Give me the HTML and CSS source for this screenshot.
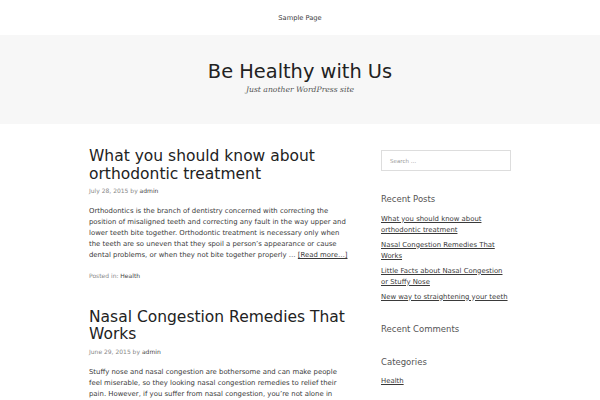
FILE: index.html
```html
<!DOCTYPE html>
<html lang="en">
<head>
<meta charset="utf-8">
<title>Be Healthy with Us</title>
<link rel="stylesheet" href="styles.css">
</head>
<body>
<nav class="topnav"><a class="navlink" href="#">Sample Page</a></nav>
<header class="masthead">
  <h1 class="site-title">Be Healthy with Us</h1>
  <p class="site-desc">Just another WordPress site</p>
</header>
<div class="container">
  <main class="content">
    <article class="post">
      <h2 class="post-title">What you should know about orthodontic treatment</h2>
      <div class="meta"><span class="date">July 28, 2015</span> by <span class="author">admin</span></div>
      <p class="excerpt">Orthodontics is the branch of dentistry concerned with correcting the position of misaligned teeth and correcting any fault in the way upper and lower teeth bite together. Orthodontic treatment is necessary only when the teeth are so uneven that they spoil a person’s appearance or cause dental problems, or when they not bite together properly … <a class="more" href="#">[Read more…]</a></p>
      <div class="cats">Posted in: <span class="cat">Health</span></div>
    </article>
    <article class="post">
      <h2 class="post-title">Nasal Congestion Remedies That Works</h2>
      <div class="meta"><span class="date">June 29, 2015</span> by <span class="author">admin</span></div>
      <p class="excerpt">Stuffy nose and nasal congestion are bothersome and can make people feel miserable, so they looking nasal congestion remedies to relief their pain. However, if you suffer from nasal congestion, you’re not alone in this.</p>
    </article>
  </main>
  <aside class="sidebar">
    <div class="widget search-widget">
      <div class="search-box">Search …</div>
    </div>
    <div class="widget">
      <h3 class="widget-title">Recent Posts</h3>
      <ul class="wlist">
        <li><a href="#">What you should know about orthodontic treatment</a></li>
        <li><a href="#">Nasal Congestion Remedies That Works</a></li>
        <li><a href="#">Little Facts about Nasal Congestion or Stuffy Nose</a></li>
        <li><a href="#">New way to straightening your teeth</a></li>
      </ul>
    </div>
    <div class="widget">
      <h3 class="widget-title">Recent Comments</h3>
    </div>
    <div class="widget">
      <h3 class="widget-title">Categories</h3>
      <ul class="wlist">
        <li><a href="#">Health</a></li>
      </ul>
    </div>
  </aside>
</div>
</body>
</html>
```

FILE: styles.css
```css
html, body {
  margin: 0;
  padding: 0;
  background: #ffffff;
}
body {
  font-family: "DejaVu Sans", sans-serif;
  color: #3a3a3a;
  overflow: hidden;
  height: 400px;
}
.topnav {
  height: 35px;
  display: flex;
  align-items: center;
  justify-content: center;
}
.navlink {
  font-size: 6.7px;
  color: #3a3a3a;
  text-decoration: none;
}
.masthead {
  background: #f7f7f7;
  height: 89px;
  box-sizing: border-box;
  padding-top: 25px;
  text-align: center;
}
.site-title {
  margin: 0;
  font-weight: normal;
  font-size: 19.4px;
  line-height: 23px;
  color: #222222;
}
.site-desc {
  margin: 1px 0 0;
  font-family: "DejaVu Serif", serif;
  font-style: italic;
  font-size: 7.65px;
  line-height: 11px;
  color: #555555;
}
.container {
  width: 422px;
  margin: 0 auto;
  display: flex;
  gap: 32px;
  padding-top: 24px;
}
.content {
  width: 260px;
  flex: none;
}
.post {
  margin-bottom: 28.5px;
}
.post-title {
  margin: 0;
  font-weight: normal;
  font-size: 15.5px;
  line-height: 17.5px;
  color: #222222;
}
.meta {
  font-size: 6px;
  line-height: 9px;
  margin-top: 3px;
  color: #888888;
}
.author, .cat {
  color: #444444;
}
.excerpt {
  margin: 11px 0 0;
  font-size: 6.9px;
  line-height: 11.1px;
}
.more {
  color: #3a3a3a;
}
.cats {
  font-size: 6px;
  line-height: 9px;
  margin-top: 10px;
  color: #888888;
}
.sidebar {
  width: 130px;
  flex: none;
  padding-top: 2px;
}
.widget {
  margin-bottom: 20.5px;
}
.search-widget {
  margin-bottom: 22px;
}
.search-box {
  height: 21px;
  box-sizing: border-box;
  border: 1px solid #dddddd;
  font-size: 5.5px;
  color: #999999;
  display: flex;
  align-items: center;
  padding-left: 8px;
}
.widget-title {
  margin: 0;
  font-weight: normal;
  font-size: 8.5px;
  line-height: 12px;
  color: #555555;
}
.wlist {
  list-style: none;
  margin: 8.5px 0 0;
  padding: 0;
  font-size: 6.9px;
  line-height: 11px;
}
.wlist li {
  margin-bottom: 4px;
}
.wlist li:last-child {
  margin-bottom: 0;
}
.wlist a {
  color: #3a3a3a;
}
```
